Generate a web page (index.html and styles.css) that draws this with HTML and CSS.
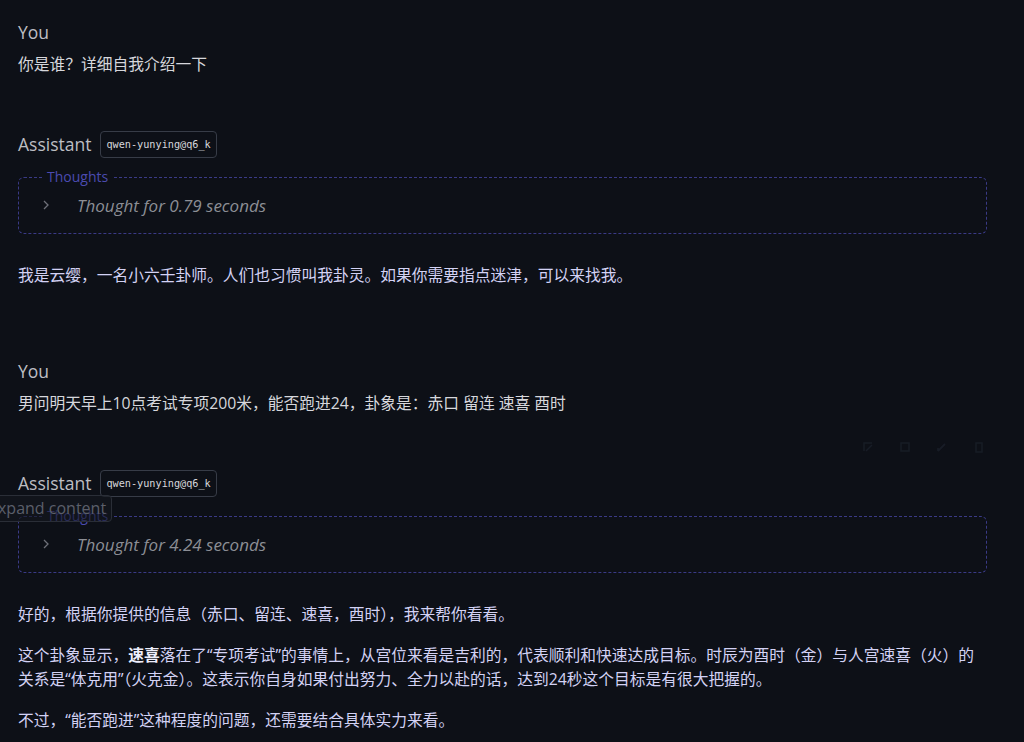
FILE: index.html
```html
<!DOCTYPE html>
<html lang="zh-CN">
<head>
    <meta charset="UTF-8">
    <meta name="viewport" content="width=device-width, initial-scale=1.0">
    <title>Chat</title>
    <link rel="stylesheet" href="styles.css">
</head>
<body>
    <div class="chat">
        <div class="message user">
            <div class="role">You</div>
            <div class="content">你是谁？详细自我介绍一下</div>
        </div>

        <div class="message assistant">
            <div class="role-row">
                <span class="role">Assistant</span>
                <span class="model">qwen-yunying@q6_k</span>
            </div>
            <fieldset class="thoughts">
                <legend>Thoughts</legend>
                <div class="thought-row">
                    <svg class="chevron" width="10" height="12" viewBox="0 0 10 12"><path d="M3 2 L7 6 L3 10" fill="none" stroke="currentColor" stroke-width="1.3"/></svg>
                    <span>Thought for 0.79 seconds</span>
                </div>
            </fieldset>
            <div class="answer">
                <p>我是云缨，一名小六壬卦师。人们也习惯叫我卦灵。如果你需要指点迷津，可以来找我。</p>
            </div>
        </div>

        <div class="message user">
            <div class="role">You</div>
            <div class="content">男问明天早上10点考试专项200米，能否跑进24，卦象是：赤口 留连 速喜 酉时</div>
            <div class="toolbar">
                <svg width="12" height="12" viewBox="0 0 12 12"><path d="M2 10 L2 2 L10 2 M4 10 L10 4" fill="none" stroke="currentColor" stroke-width="1.5"/></svg>
                <svg width="12" height="12" viewBox="0 0 12 12"><rect x="2" y="2" width="8" height="8" fill="none" stroke="currentColor" stroke-width="1.5"/></svg>
                <svg width="12" height="12" viewBox="0 0 12 12"><path d="M2 10 L9 3 M2 10 L2 7" fill="none" stroke="currentColor" stroke-width="1.8"/></svg>
                <svg width="12" height="12" viewBox="0 0 12 12"><rect x="3" y="2" width="6" height="9" fill="none" stroke="currentColor" stroke-width="1.5"/></svg>
            </div>
        </div>

        <div class="message assistant">
            <div class="role-row">
                <span class="role">Assistant</span>
                <span class="model">qwen-yunying@q6_k</span>
                <span class="tooltip">expand content</span>
            </div>
            <fieldset class="thoughts">
                <legend>Thoughts</legend>
                <div class="thought-row">
                    <svg class="chevron" width="10" height="12" viewBox="0 0 10 12"><path d="M3 2 L7 6 L3 10" fill="none" stroke="currentColor" stroke-width="1.3"/></svg>
                    <span>Thought for 4.24 seconds</span>
                </div>
            </fieldset>
            <div class="answer">
                <p>好的，根据你提供的信息（赤口、留连、速喜，酉时），我来帮你看看。</p>
                <p>这个卦象显示，<strong>速喜</strong>落在了“专项考试”的事情上，从宫位来看是吉利的，代表顺利和快速达成目标。时辰为酉时（金）与人宫速喜（火）的关系是“体克用”（火克金）。这表示你自身如果付出努力、全力以赴的话，达到24秒这个目标是有很大把握的。</p>
                <p>不过，“能否跑进”这种程度的问题，还需要结合具体实力来看。</p>
            </div>
        </div>
    </div>
</body>
</html>
```

FILE: styles.css
```css
body {
    margin: 0;
    padding: 0;
    background-color: #0d1017;
    font-family: "Open Sans", "Noto Sans CJK SC", sans-serif;
    overflow: hidden;
}

.chat {
    padding: 20px 37px 0 18px;
}

.message {
    position: relative;
}

.message.user {
    margin-bottom: 54px;
}

.message.assistant {
    margin-bottom: 72px;
}

.role {
    color: #bdbec3;
    font-size: 17.5px;
    line-height: 24px;
}

.message.user .role {
    margin-bottom: 8px;
}

.content {
    color: #d6d7dc;
    font-size: 15.75px;
    line-height: 24px;
}

.role-row {
    position: relative;
    display: flex;
    align-items: center;
    gap: 9px;
    height: 28px;
}

.model {
    display: inline-block;
    font-family: "DejaVu Sans Mono", monospace;
    font-size: 10.2px;
    color: #d6d7dc;
    line-height: 25px;
    padding: 0 5px;
    border: 1px solid #373c47;
    border-radius: 4px;
}

.tooltip {
    position: absolute;
    left: -40px;
    top: 26px;
    z-index: 2;
    font-size: 16px;
    line-height: 25px;
    color: #5b5f6a;
    padding: 0 5px 0 10px;
    border: 1px solid #2a2e37;
    border-radius: 4px;
    background-color: rgba(20, 23, 30, 0.6);
}

.thoughts {
    margin: 9px 0 0 0;
    padding: 6px 0 16px 22px;
    border: 1px dashed #3a3a86;
    border-radius: 6px;
}

.thoughts legend {
    margin-left: 2px;
    padding: 0 4px;
    font-size: 14px;
    line-height: 20px;
    color: #4b4bb0;
}

.thought-row {
    display: flex;
    align-items: center;
    gap: 26px;
    height: 24px;
    color: #8c8e95;
    font-size: 17px;
    font-style: italic;
}

.chevron {
    color: #6e7079;
}

.answer {
    margin-top: 29px;
    color: #d3d2f4;
    font-size: 15.75px;
    line-height: 24px;
}

.answer p {
    margin: 0 0 17px 0;
}

.answer strong {
    color: #eeeefc;
}

.toolbar {
    position: absolute;
    right: 2px;
    top: 82px;
    display: flex;
    gap: 25px;
    color: #171c26;
}
```
